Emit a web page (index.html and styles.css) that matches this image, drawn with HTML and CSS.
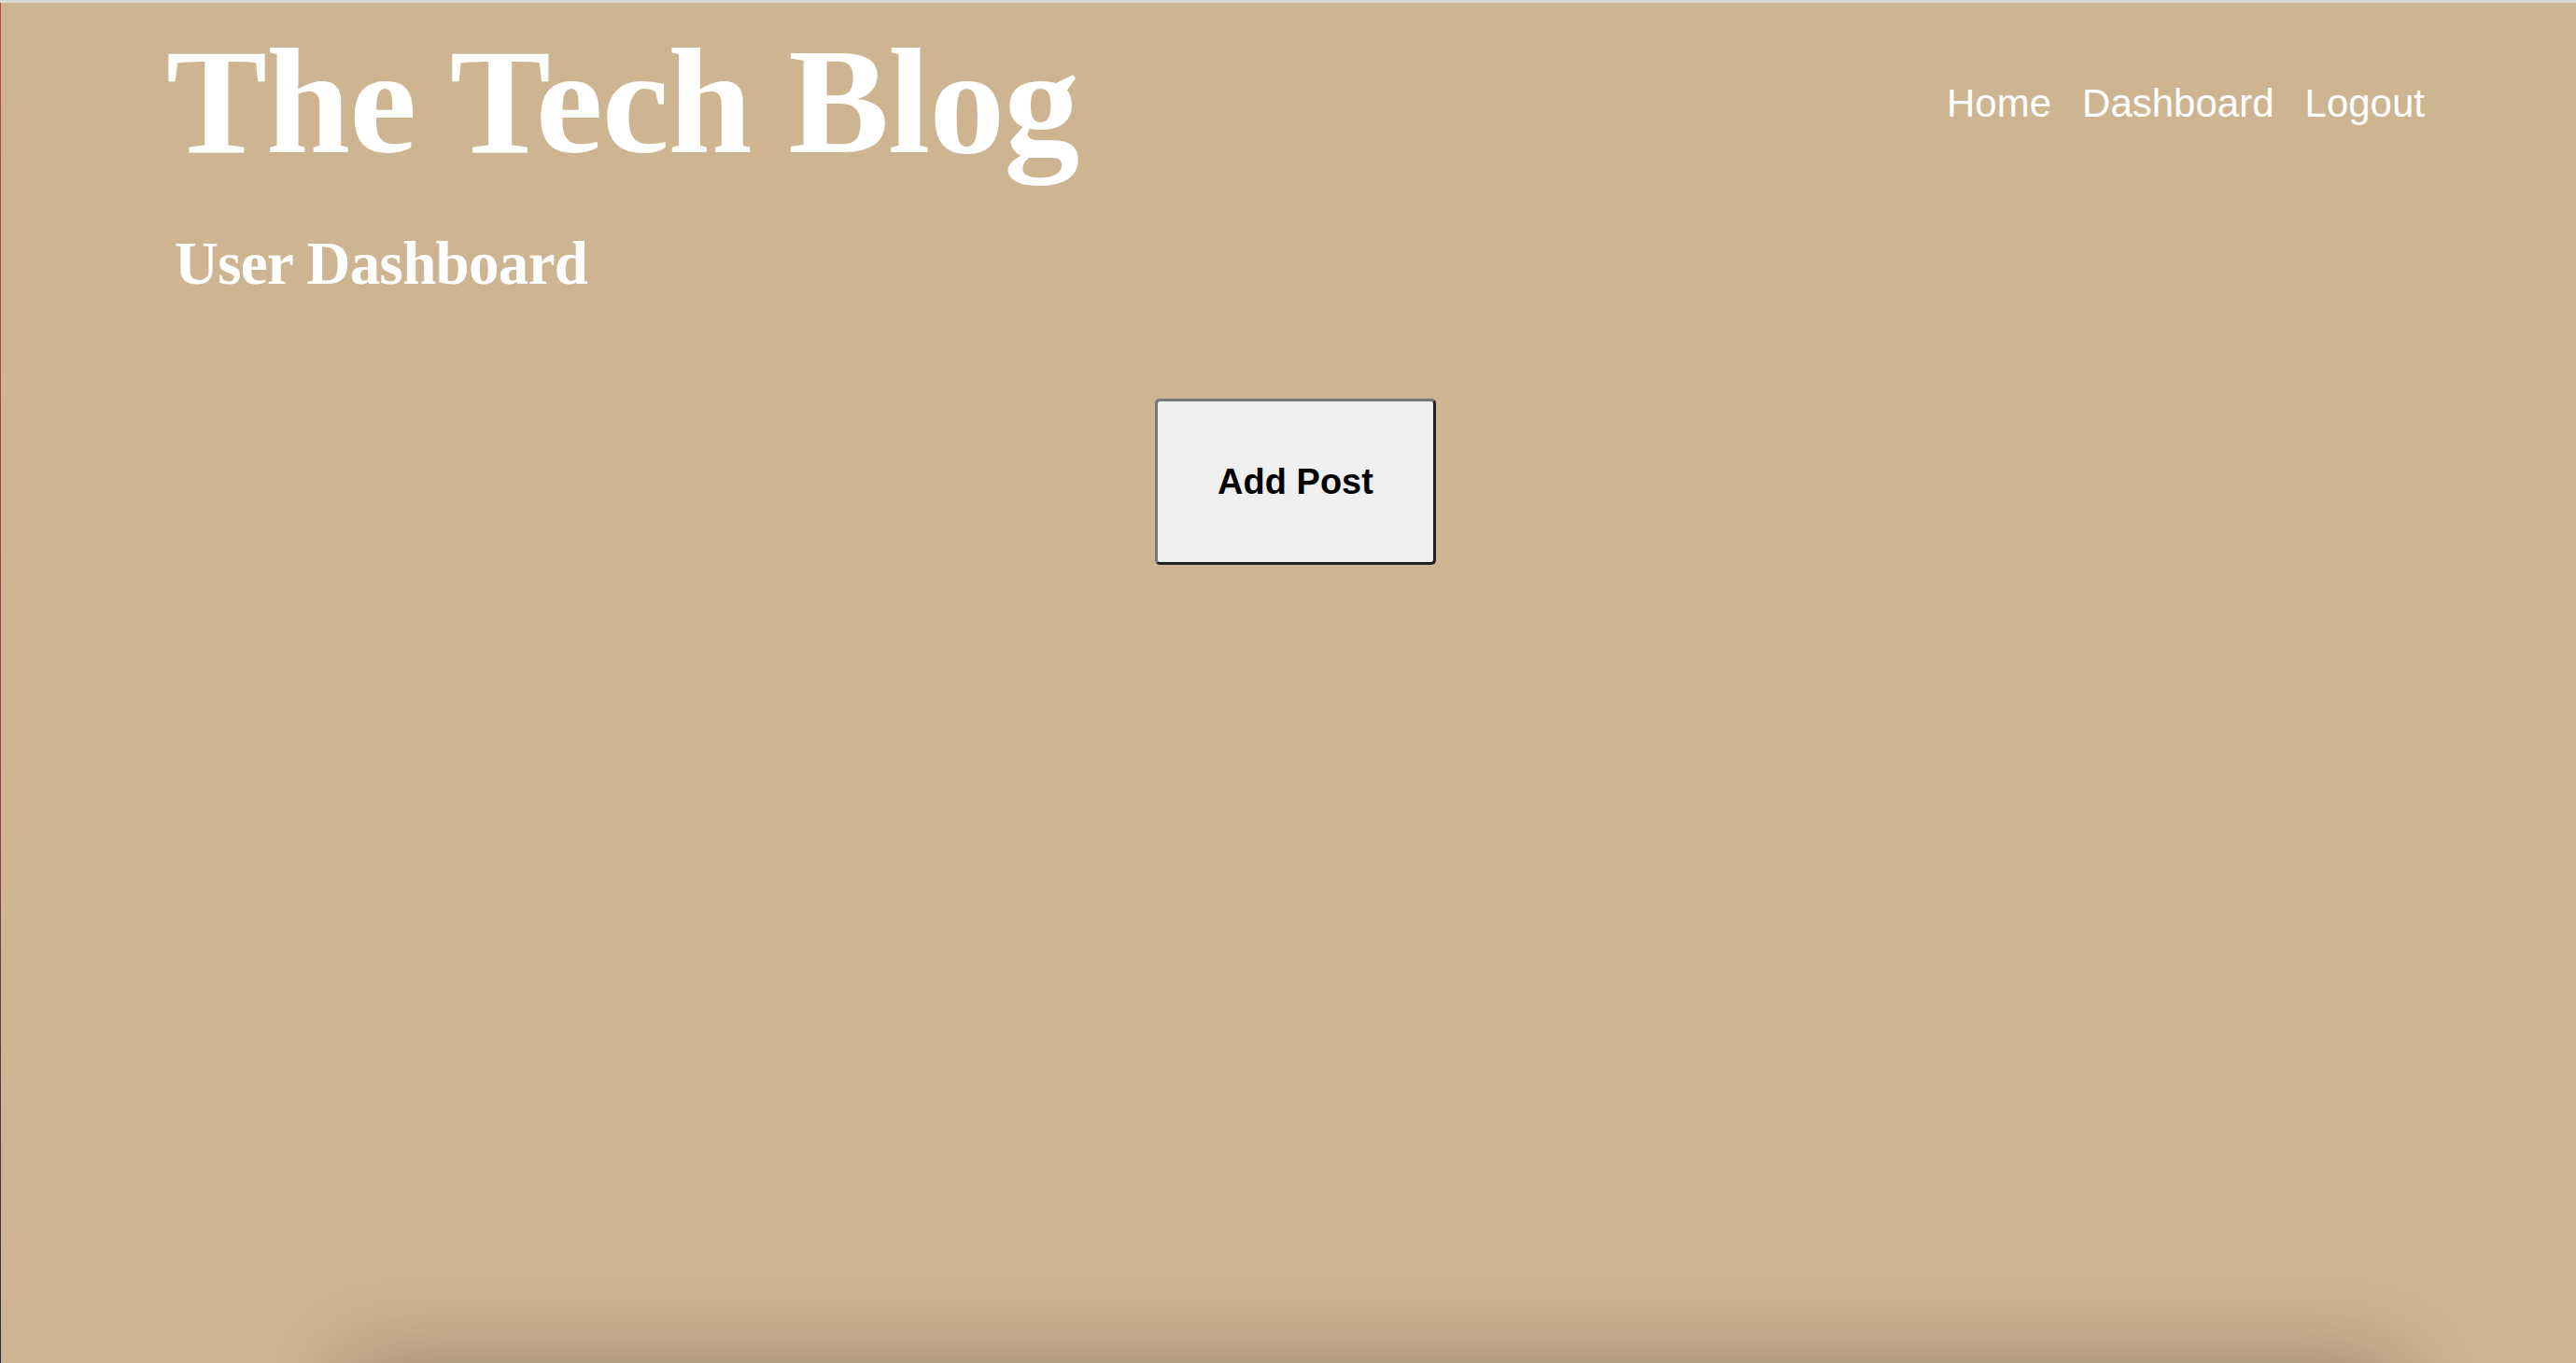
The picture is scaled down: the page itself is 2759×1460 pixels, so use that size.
FILE: index.html
```html
<!DOCTYPE html>
<html lang="en">
<head>
<meta charset="utf-8">
<title>The Tech Blog - Dashboard</title>
<link rel="stylesheet" href="styles.css">
</head>
<body>
<div class="page">
  <header class="site-header">
    <h1 class="site-title">The Tech Blog</h1>
    <nav class="site-nav">
      <a href="#" class="nav-link">Home</a>
      <a href="#" class="nav-link">Dashboard</a>
      <a href="#" class="nav-link">Logout</a>
    </nav>
  </header>
  <h2 class="page-title">User Dashboard</h2>
  <main class="dashboard">
    <button class="add-post" type="button">Add Post</button>
  </main>
</div>
<section class="posts"></section>
</body>
</html>
```

FILE: styles.css
```css
html {
  background: #ceb592;
}

body {
  margin: 0;
  background: #ceb592;
  border-top: 3px solid #d9dbdb;
  overflow-x: hidden;
}

.page {
  min-height: 1457px;
  display: flex;
  flex-direction: column;
  border-left: 1px solid transparent;
  border-image: linear-gradient(to bottom, #b7473b, #8a3f55 60%, #1f2a4a) 1;
  box-sizing: border-box;
}

.site-header {
  display: flex;
  justify-content: space-between;
  align-items: flex-start;
  padding: 25px 162px 0 177px;
}

.site-title {
  margin: 0;
  font-family: "Liberation Serif", "Times New Roman", serif;
  font-weight: bold;
  font-size: 162px;
  line-height: 1;
  letter-spacing: -1px;
  color: #ffffff;
}

.site-nav {
  display: flex;
  gap: 33px;
  margin-top: 62px;
}

.nav-link {
  font-family: "Liberation Sans", Arial, Helvetica, sans-serif;
  font-size: 42px;
  line-height: 1;
  color: #ffffff;
  text-decoration: none;
}

.page-title {
  margin: 60px 0 0 186px;
  font-family: "Liberation Serif", "Times New Roman", serif;
  font-weight: bold;
  font-size: 65px;
  line-height: 1;
  letter-spacing: -0.7px;
  color: #ffffff;
}

.dashboard {
  flex: 1;
  display: flex;
  justify-content: center;
  align-items: flex-start;
  padding: 112px 0 0 15px;
}

.add-post {
  font-family: "Liberation Sans", Arial, Helvetica, sans-serif;
  font-weight: bold;
  font-size: 38px;
  line-height: 44px;
  color: #000000;
  background: #efefef;
  padding: 64px 64px;
  border-width: 3px;
  border-style: solid;
  border-color: #767676 #222222 #222222 #767676;
  border-radius: 5px;
  cursor: pointer;
}

.posts {
  margin-left: 370px;
  width: 2200px;
  height: 300px;
  background: #ceb592;
  box-shadow: 0 0 90px rgba(0, 0, 0, 0.26);
}
```
